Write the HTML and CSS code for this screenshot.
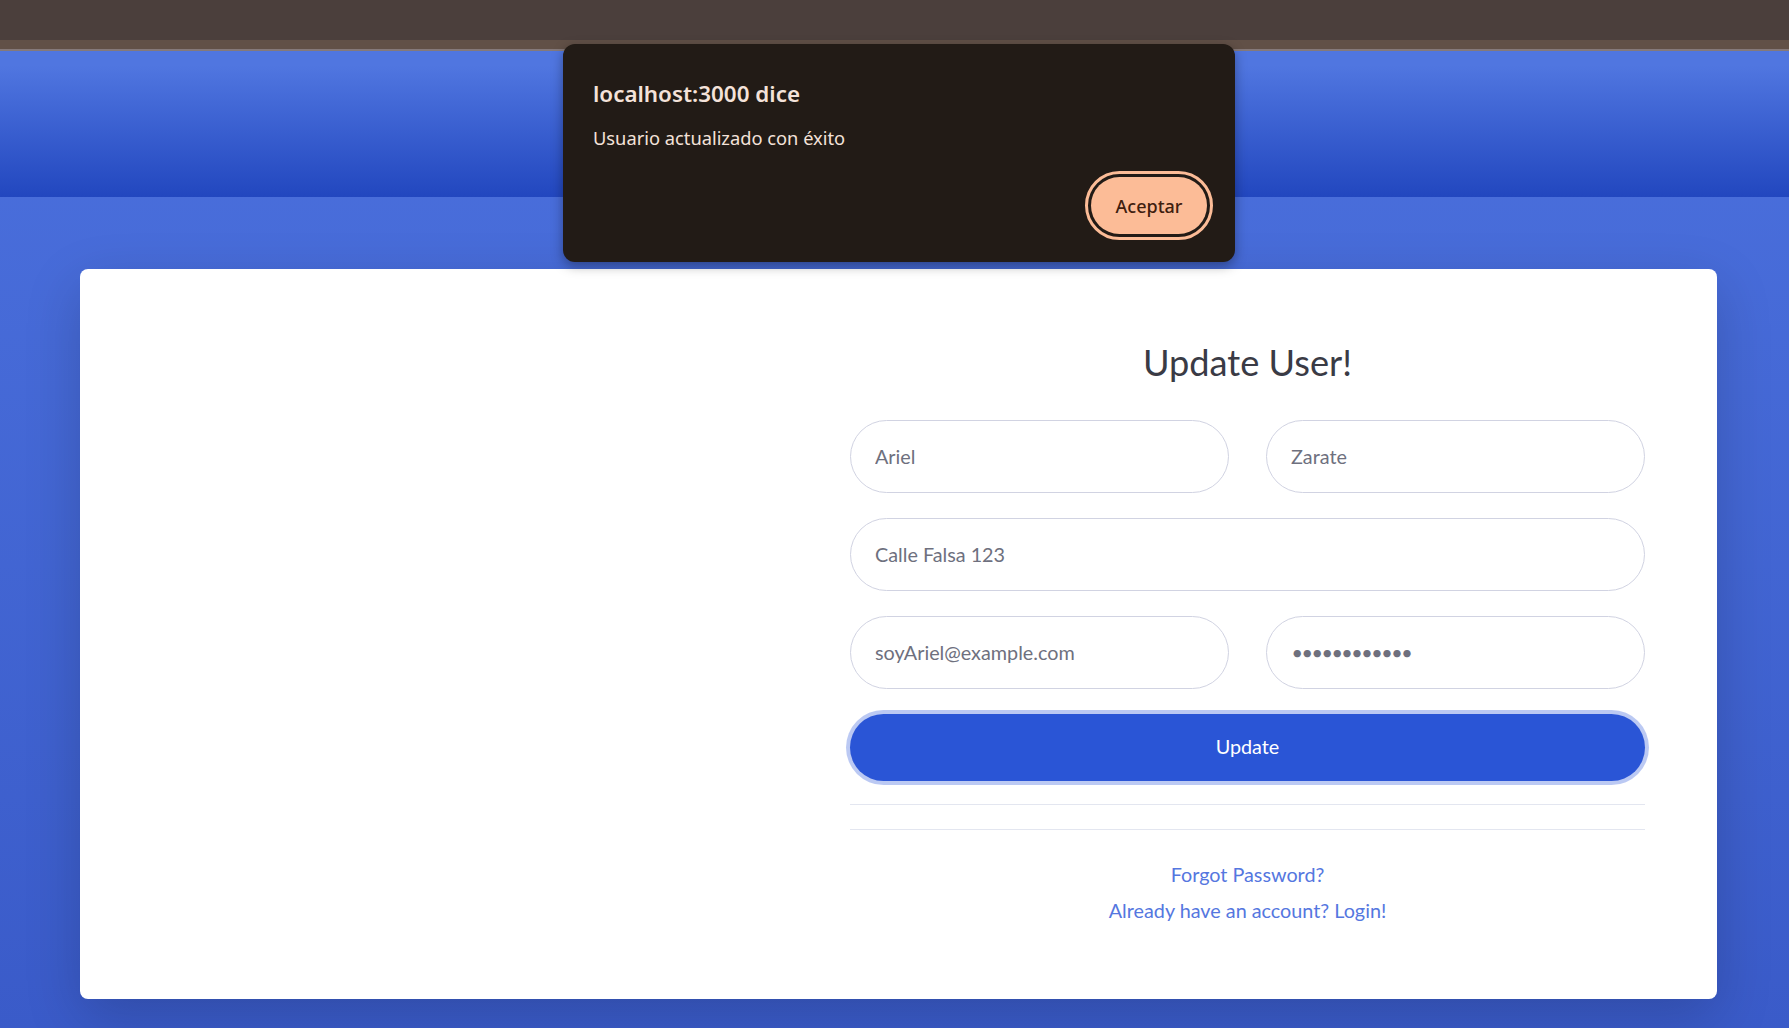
FILE: index.html
```html
<!DOCTYPE html>
<html lang="es">
<head>
<meta charset="utf-8">
<title>Update User</title>
<link rel="stylesheet" href="styles.css">
</head>
<body>
<div class="chrome-bar"></div>
<div class="chrome-strip"></div>
<div class="topband"></div>
<main class="page">
  <div class="card">
    <div class="card-image"></div>
    <div class="card-form">
      <h1 class="title">Update User!</h1>
      <form class="form">
        <div class="row two">
          <input class="field" type="text" value="Ariel">
          <input class="field" type="text" value="Zarate">
        </div>
        <div class="row">
          <input class="field" type="text" value="Calle Falsa 123">
        </div>
        <div class="row two">
          <input class="field" type="email" value="soyAriel@example.com">
          <input class="field field-pass" type="password" value="123456789012">
        </div>
        <button type="button" class="btn-update">Update</button>
      </form>
      <hr class="sep">
      <hr class="sep">
      <div class="links">
        <a href="#" class="link">Forgot Password?</a>
        <a href="#" class="link">Already have an account? Login!</a>
      </div>
    </div>
  </div>
</main>
<div class="dialog" role="alertdialog">
  <div class="dialog-title">localhost:3000 dice</div>
  <div class="dialog-msg">Usuario actualizado con éxito</div>
  <div class="dialog-actions">
    <button type="button" class="dialog-btn">Aceptar</button>
  </div>
</div>
</body>
</html>
```
FILE: styles.css
```css
* { box-sizing: border-box; }
html, body { margin: 0; padding: 0; }
body {
  width: 1789px;
  height: 1028px;
  overflow: hidden;
  position: relative;
  background: linear-gradient(180deg, #4e73df 0%, #4a6fdc 10%, #3a5bc9 100%);
  font-family: "Lato", "Open Sans", sans-serif;
}
.chrome-bar { height: 40px; background: #4b3f3c; }
.chrome-strip { height: 11px; background: #615047; border-bottom: 2px solid #85797a; }
.topband {
  height: 146px;
  background: linear-gradient(180deg, #5076e0 10%, #2247bf 100%);
}
.page { padding: 72px 72px 0 80px; }
.card {
  width: 1637px;
  height: 730px;
  background: #fff;
  border-radius: 8px;
  box-shadow: 0 18px 55px rgba(0,0,0,.175);
  display: flex;
}
.card-image { flex: 1; }
.card-form { width: 939px; padding: 71px 72px 0; }
.title {
  margin: 0 0 36px;
  font-weight: 400;
  font-size: 36.2px;
  line-height: 44px;
  text-align: center;
  color: #3a3b45;
}
.form { display: flex; flex-direction: column; gap: 25px; }
.row { display: flex; gap: 37px; }
.row.two .field { flex: 1; }
.field {
  width: 100%;
  height: 73px;
  border: 1px solid #d1d3e2;
  border-radius: 999px;
  padding: 0 24px 2px;
  font-family: inherit;
  font-size: 19.8px;
  color: #6e707e;
  background: #fff;
  outline: none;
}
.field-pass { letter-spacing: -1.5px; padding-left: 25px; }
.btn-update {
  height: 67px;
  border: none;
  border-radius: 999px;
  background: #2a55d6;
  color: #fff;
  font-family: inherit;
  font-size: 19.8px;
  padding: 0 0 4px;
  box-shadow: 0 0 0 4px rgba(105,136,228,.45);
}
.sep { margin: 23px 0 0; border: 0; border-top: 1px solid #e3e6f0; }
.sep + .sep { margin-top: 24px; }
.links { display: flex; flex-direction: column; align-items: center; gap: 12px; margin-top: 32px; }
.link { color: #5577e0; text-decoration: none; font-size: 19.8px; line-height: 24px; }
.dialog {
  position: absolute;
  left: 563px;
  top: 44px;
  width: 672px;
  height: 218px;
  background: #221b16;
  border-radius: 12px;
  box-shadow: 0 4px 12px rgba(0,0,0,.35);
  padding: 35px 28px 28px 30px;
  font-family: "Noto Sans", sans-serif;
  color: #f4e2d9;
  display: flex;
  flex-direction: column;
}
.dialog-title { font-size: 22.4px; font-weight: 600; line-height: 30px; }
.dialog-msg { font-size: 18.3px; margin-top: 16px; line-height: 26px; }
.dialog-actions { display: flex; justify-content: flex-end; margin-top: auto; }
.dialog-btn {
  width: 116px;
  height: 57px;
  border: none;
  border-radius: 999px;
  background: #fcbc97;
  color: #3f200f;
  font-family: "Noto Sans", sans-serif;
  font-size: 18px;
  font-weight: 500;
  outline: 3px solid #fcbc97;
  outline-offset: 3px;
}
```
